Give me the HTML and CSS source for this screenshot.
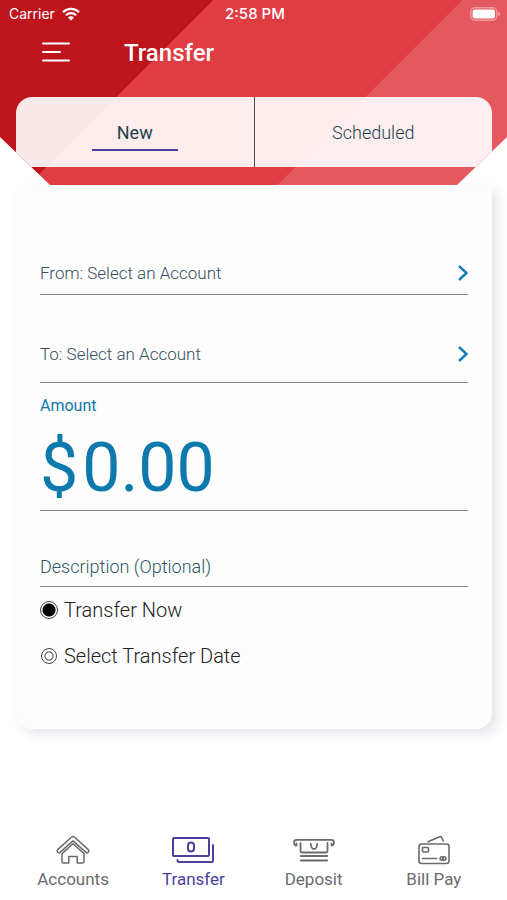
FILE: index.html
```html
<!DOCTYPE html>
<html lang="en">
<head>
<meta charset="utf-8">
<meta name="viewport" content="width=device-width, initial-scale=1">
<title>Transfer</title>
<link rel="stylesheet" href="styles.css">
</head>
<body>
<header class="hero">
  <div class="status">
    <span class="carrier">Carrier
      <svg class="wifi" viewBox="0 0 18 14" aria-hidden="true"><path d="M1 5.2a11.4 11.4 0 0 1 16 0M3.9 8.2a7.3 7.3 0 0 1 10.2 0" fill="none" stroke="currentColor" stroke-width="2.3"/><path d="M9 13.6 5.9 10.5a4.4 4.4 0 0 1 6.2 0z" fill="currentColor"/></svg>
    </span>
    <span class="clock">2:58 PM</span>
    <svg class="battery" viewBox="0 0 31 14" aria-hidden="true"><rect x=".8" y=".8" width="26" height="12.4" rx="4" fill="none" stroke="#fff" stroke-opacity=".4" stroke-width="1.4"/><rect x="2.600" y="2.600" width="22.400" height="8.800" rx="2" fill="#fff"/><path d="M28.500 4.800c2 .8 2 3.600 0 4.400z" fill="#fff" fill-opacity=".5"/></svg>
  </div>
  <div class="titlebar">
    <button class="menu" type="button" aria-label="Menu">
      <svg viewBox="0 0 28 20" aria-hidden="true"><path d="M1 1.500h26M1 10h17M1 18.500h26" stroke="currentColor" stroke-width="2" stroke-linecap="round"/></svg>
    </button>
    <h1>Transfer</h1>
  </div>
  <nav class="tabs" aria-label="Transfers">
    <button class="tab tab-active" type="button"><span>New</span></button>
    <button class="tab" type="button"><span>Scheduled</span></button>
  </nav>
</header>

<main>
  <form class="card">
    <button class="picker picker-from" type="button">From: Select an Account
      <svg viewBox="0 0 10 16" aria-hidden="true"><path d="m1 1 7.500 7L1 15" fill="none" stroke="currentColor" stroke-width="2.400"/></svg>
    </button>
    <button class="picker picker-to" type="button">To: Select an Account
      <svg viewBox="0 0 10 16" aria-hidden="true"><path d="m1 1 7.500 7L1 15" fill="none" stroke="currentColor" stroke-width="2.400"/></svg>
    </button>
    <div class="amount">
      <label for="amount">Amount</label>
      <div class="money"><span>$</span><input id="amount" type="text" inputmode="decimal" value="0.00"></div>
    </div>
    <input class="description" type="text" placeholder="Description (Optional)" aria-label="Description (Optional)">
    <label class="choice"><input type="radio" name="when" checked>Transfer Now</label>
    <label class="choice"><input type="radio" name="when">Select Transfer Date</label>
  </form>
</main>

<nav class="bottom" aria-label="Main">
  <a href="#accounts">
    <svg viewBox="0 0 44 30" aria-hidden="true" fill="none" stroke="currentColor" stroke-width="1.500" stroke-linejoin="round"><path d="M22 1.600q.9 0 1.600.7L37.300 14.600q1.200 1.100.2 2.500-1.200 1.400-2.500.3L22 5.900 9 17.400q-1.300 1.100-2.500-.3-1-1.400.2-2.500L20.400 2.300q.7-.7 1.600-.7z"/><path d="M22 8.800 11 18.600v7.900q0 1.500 1.500 1.500h5.300v-6.500h8.400V28h5.300q1.500 0 1.500-1.500v-7.900z"/></svg>
    <span>Accounts</span>
  </a>
  <a href="#transfer" class="current" aria-current="page">
    <svg viewBox="0 0 44 30" aria-hidden="true" fill="none" stroke="currentColor" stroke-width="2" stroke-linecap="round" stroke-linejoin="round"><rect x="2" y="3" width="36" height="18" rx="1"/><rect x="17" y="7.500" width="6" height="9" rx="3"/><path d="M42 10v15.500q0 1.500-1.500 1.500H8q-1.500 0-1.500-2"/></svg>
    <span>Transfer</span>
  </a>
  <a href="#deposit">
    <svg viewBox="0 0 44 30" aria-hidden="true" fill="none" stroke="currentColor" stroke-width="1.800" stroke-linecap="round" stroke-linejoin="round"><path d="M4.500 10.500H3.500Q2 10 2 7.300q0-2.500 2.700-2.500h34.600Q42 4.800 42 7.300q0 2.700-1.500 3.200h-1V8.500M4.500 10.500v-2"/><path d="M8.500 8v8q0 1.500 1.500 1.500h24q1.500 0 1.500-1.500V8M18.800 9q.5 5 3.200 5t3.200-5"/><path d="M9 21h26M9 25.500h26" stroke-width="2.200"/></svg>
    <span>Deposit</span>
  </a>
  <a href="#billpay">
    <svg viewBox="0 0 44 30" aria-hidden="true" fill="none" stroke="currentColor" stroke-width="1.600" stroke-linecap="round" stroke-linejoin="round"><rect x="7" y="9" width="30" height="19.500" rx="2.500"/><path d="m16 6.800 11.500-5q1.500-.6 2.200.8L31.300 6"/><rect x="10.500" y="12.500" width="6" height="4.500" rx="1"/><path d="M10.500 23.500h14"/><circle cx="29.800" cy="23.500" r="1.700"/><circle cx="32.200" cy="23.500" r="1.700"/></svg>
    <span>Bill Pay</span>
  </a>
</nav>
</body>
</html>
```

FILE: styles.css
```css
* { box-sizing: border-box; }

body {
  margin: 0;
  min-height: 100vh;
  display: flex;
  flex-direction: column;
  background: #fff;
  font-family: Roboto, "Liberation Sans", sans-serif;
}

button, input {
  font: inherit;
  color: inherit;
  margin: 0;
  padding: 0;
  border: 0;
  background: none;
}

.hero {
  padding-bottom: 18px;
  background: linear-gradient(135deg, #bd151b 151px, #e03d43 151px, #e03d43 327px, #e4585f 327px);
  clip-path: polygon(0 0, 100% 0, 100% 137px, calc(100% - 50px) 100%, 50px 100%, 0 137px);
  color: #fff;
}

.status {
  display: grid;
  grid-template-columns: 1fr auto 1fr;
  align-items: center;
  height: 27px;
  padding: 0 6px 0 9px;
  font: 14px Inter, sans-serif;
}

.carrier { display: flex; align-items: center; gap: 7px; }
.wifi { width: 18px; height: 14px; }
.clock { font-size: 15px; font-weight: 500; }
.battery { width: 31px; height: 14px; justify-self: end; }

.titlebar {
  display: flex;
  align-items: center;
  gap: 54px;
  height: 50px;
  padding-left: 42px;
  margin-bottom: 20px;
}

.menu { width: 28px; height: 20px; }
.menu svg { display: block; width: 28px; height: 20px; }

h1 {
  margin: 0;
  padding-top: 2px;
  font-size: 24px;
  line-height: 32px;
  font-weight: 500;
}

.tabs {
  display: flex;
  height: 70px;
  margin: 0 15px 0 16px;
  border-radius: 16px 16px 0 0;
  overflow: hidden;
  background: rgba(255, 255, 255, .9);
}

.tab {
  flex: 1;
  padding-top: 4px;
  font-size: 18px;
  font-weight: 300;
  color: #1f434c;
}

.tab + .tab { border-left: 1px solid #57464c; }
.tab-active { font-weight: 400; }

.tab span {
  display: inline-block;
  width: 86px;
  line-height: 32px;
  border-bottom: 2px solid transparent;
}

.tab-active span { border-color: #4d3f9e; }

.card {
  display: flex;
  flex-direction: column;
  margin: 0 15px 0 16px;
  padding: 76px 24px 50px;
  border-radius: 0 0 16px 16px;
  background: #fdfdfe;
  box-shadow: 6px 6px 12px #e6e6ef;
}

.picker {
  display: flex;
  align-items: center;
  justify-content: space-between;
  border-bottom: 1px solid #858585;
  font-size: 17px;
  line-height: 24px;
  font-weight: 300;
  color: #34505c;
}

.picker svg { width: 10px; height: 16px; color: #117cb5; }
.picker-from { padding-bottom: 9px; }
.picker-to { margin-top: 47px; padding-bottom: 16px; }

.amount {
  padding: 13px 0 0;
  border-bottom: 1px solid #858585;
  color: #0d79ac;
}

.amount label { display: block; font-size: 16px; line-height: 20px; }

.money {
  display: flex;
  gap: 4px;
  padding-top: 10px;
  font-size: 68px;
  line-height: 84px;
}

.money input { flex: 1; min-width: 0; height: 84px; }

.description {
  height: 40px;
  margin-top: 36px;
  border-bottom: 1px solid #858585;
  font-size: 18px;
  font-weight: 300;
  color: #2b5560;
}

.description::placeholder { color: #2b5560; opacity: 1; }

.choice {
  display: flex;
  align-items: center;
  gap: 6px;
  height: 46px;
  font-size: 20px;
  font-weight: 300;
  color: #222;
}

.choice input {
  appearance: none;
  width: 16px;
  height: 16px;
  margin: 0 1px;
  border: 1px solid #444;
  border-radius: 50%;
  background: radial-gradient(circle, transparent 3px, #444 4px, #444 4px, transparent 5px);
}

.choice input:checked {
  width: 18px;
  height: 18px;
  margin: 0;
  background: radial-gradient(circle, #000 5px, #000 6px, transparent 7px);
}

.bottom {
  display: grid;
  grid-template-columns: repeat(4, 1fr);
  margin: auto 13px 0;
  padding-bottom: 9px;
}

.bottom a {
  display: flex;
  flex-direction: column;
  align-items: center;
  gap: 2px;
  font-size: 17px;
  line-height: 24px;
  color: #6b6b6e;
  text-decoration: none;
}

.bottom svg { width: 44px; height: 30px; }
.bottom .current { color: #4d3f9e; }
```
